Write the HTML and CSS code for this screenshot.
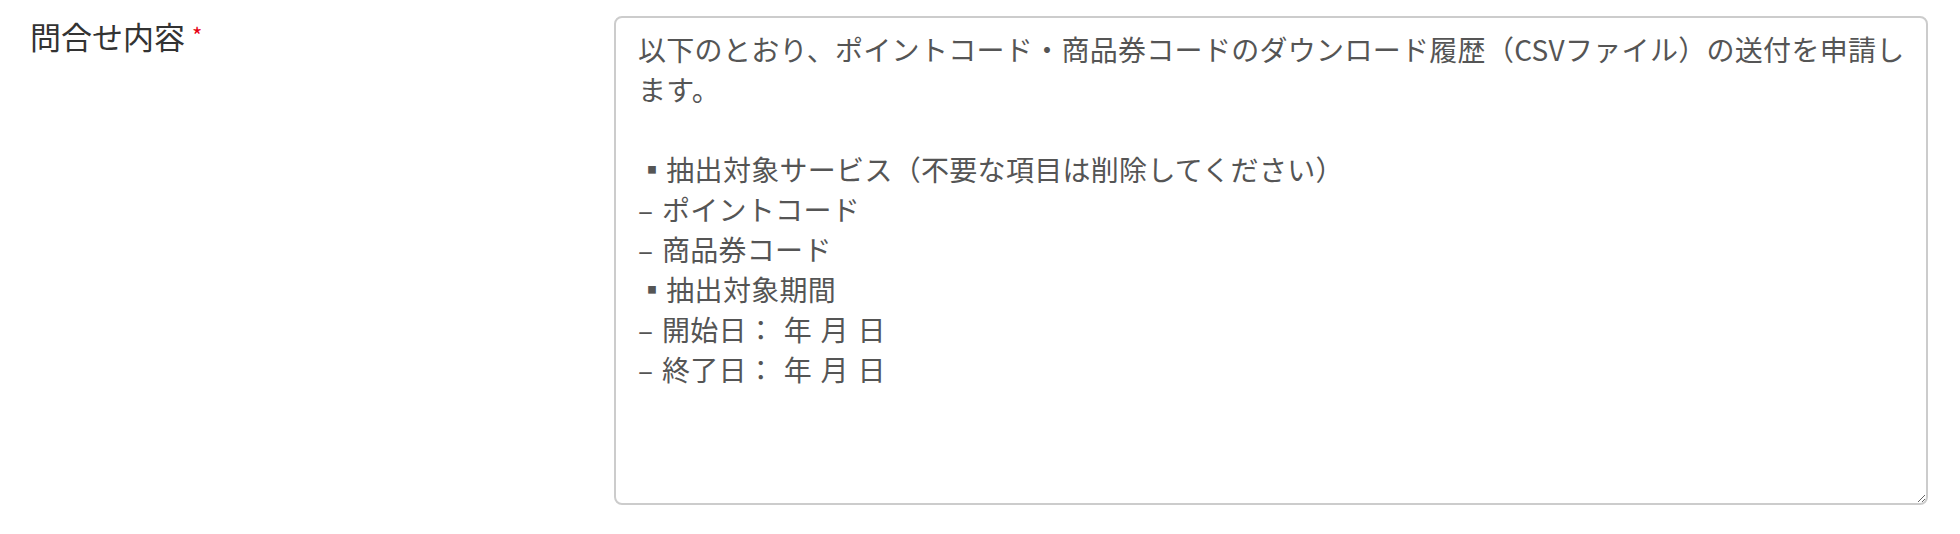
FILE: index.html
```html
<!DOCTYPE html>
<html lang="ja">
<head>
<meta charset="utf-8">
<title>問合せ内容</title>
<link rel="stylesheet" href="styles.css">
</head>
<body>
<div class="form-row">
  <label class="form-label" for="content">問合せ内容<span class="required">*</span></label>
  <div class="form-control-wrap">
    <textarea id="content" class="form-control">以下のとおり、ポイントコード・商品券コードのダウンロード履歴（CSVファイル）の送付を申請します。

▪抽出対象サービス（不要な項目は削除してください）
– ポイントコード
– 商品券コード
▪抽出対象期間
– 開始日： 年 月 日
– 終了日： 年 月 日</textarea>
  </div>
</div>
</body>
</html>
```

FILE: styles.css
```css
html, body {
  margin: 0;
  padding: 0;
  background: #ffffff;
}

body {
  width: 1960px;
  height: 534px;
  overflow: hidden;
  font-family: "Noto Sans CJK JP", "Noto Sans", sans-serif;
}

.form-row {
  display: flex;
  align-items: flex-start;
  padding: 16px 0 0 30px;
}

.form-label {
  width: 584px;
  flex: 0 0 584px;
  font-size: 31px;
  line-height: 36px;
  color: #333333;
  padding-top: 0;
}

.required {
  color: #e60012;
  font-size: 22px;
  margin-left: 7px;
  vertical-align: 5px;
}

.form-control-wrap {
  width: 1314px;
  flex: 0 0 1314px;
}

.form-control {
  display: block;
  box-sizing: border-box;
  width: 1314px;
  height: 489px;
  margin: 0;
  padding: 11px 10px 12px 22px;
  border: 2px solid #cccccc;
  border-radius: 8px;
  background: #ffffff;
  color: #555555;
  font-family: "Noto Sans CJK JP", "Noto Sans", sans-serif;
  font-size: 28px;
  line-height: 40px;
  letter-spacing: 0.3px;
  word-spacing: 2px;
  resize: vertical;
  outline: none;
}
```
